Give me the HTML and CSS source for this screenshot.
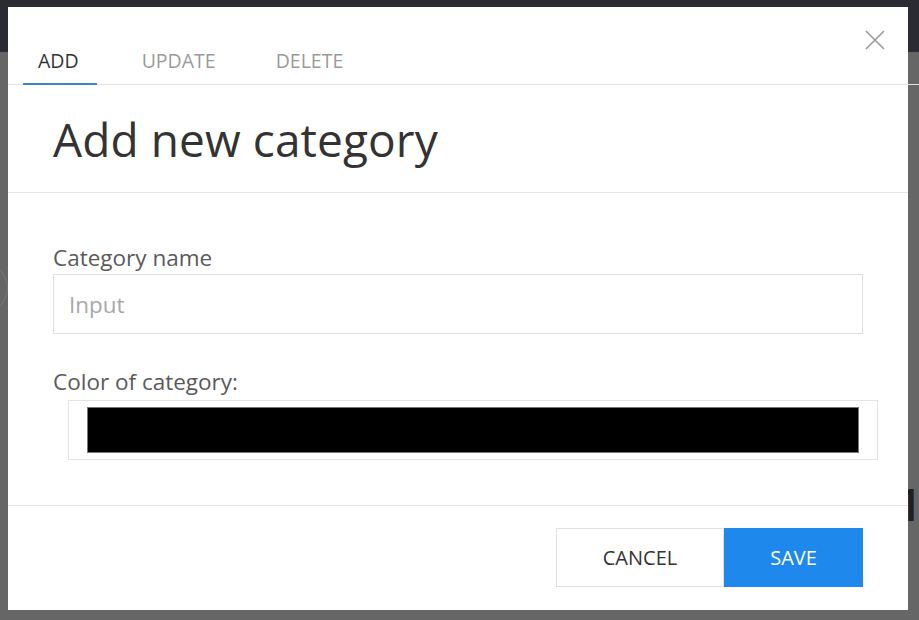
FILE: index.html
```html
<!DOCTYPE html>
<html>
<head>
<meta charset="utf-8">
<link rel="stylesheet" href="styles.css">
</head>
<body>
<div class="page">
  <div class="topbar"></div>
  <div class="backdrop">
    <div class="bg-arc"></div>
    <div class="bg-digit">1</div>
  </div>
</div>
<div class="modal">
  <button class="close" aria-label="Close">
    <svg width="20" height="20" viewBox="0 0 20 20"><path d="M1 1 L19 19 M19 1 L1 19" stroke="#9a9a9a" stroke-width="1.6" fill="none"/></svg>
  </button>
  <nav class="tabs">
    <div class="tab active">ADD</div>
    <div class="tab">UPDATE</div>
    <div class="tab">DELETE</div>
  </nav>
  <header class="head">
    <h1 class="title">Add new category</h1>
  </header>
  <section class="body">
    <label class="label">Category name</label>
    <div class="input"><span class="placeholder">Input</span></div>
    <label class="label label-color">Color of category:</label>
    <div class="color-box"><div class="swatch"></div></div>
  </section>
  <footer class="foot">
    <button class="btn btn-cancel">CANCEL</button>
    <button class="btn btn-save">SAVE</button>
  </footer>
</div>
</body>
</html>
```
FILE: styles.css
```css
* { box-sizing: border-box; }
html, body { margin: 0; padding: 0; }
body {
  width: 919px;
  height: 620px;
  overflow: hidden;
  background: #666666;
  font-family: "Open Sans", "Noto Sans", sans-serif;
}
.page { display: flex; flex-direction: column; height: 620px; }
.topbar { height: 52px; background: #2b2b33; }
.backdrop { flex: 1; position: relative; background: #666666; }
.bg-arc {
  position: absolute; left: -40px; top: 212px;
  width: 48px; height: 48px; border-radius: 50%;
  border: 1px solid #777;
}
.bg-digit {
  position: absolute; left: 896px; top: 428px;
  font-size: 46px; font-weight: 600; color: #1f1f24; line-height: 1;
}
.modal {
  position: fixed;
  left: 8px; top: 7px;
  width: 900px; height: 603px;
  background: #fff;
  display: flex; flex-direction: column;
}
.close {
  position: absolute; right: 23px; top: 23px;
  width: 20px; height: 20px; padding: 0; border: 0; background: none;
  display: flex;
}
.tabs {
  display: flex; gap: 30px;
  height: 78px;
  padding: 0 15px;
  align-items: flex-end;
  border-bottom: 1px solid #e2e2e2;
  margin-right: -11px;
}
.tab {
  padding: 0 15px 9px;
  font-size: 19.5px;
  line-height: 26px;
  color: #9a9a9a;
  margin-bottom: -1px;
  border-bottom: 2px solid transparent;
}
.tab.active { color: #333; border-bottom-color: #3b86cf; padding-right: 18px; }
.head {
  height: 108px;
  padding: 0 45px;
  display: flex; align-items: center;
  border-bottom: 1px solid #e4e4e4;
}
.title {
  margin: 0; font-weight: 400;
  font-size: 46px; color: #333; line-height: 60px;
  letter-spacing: 0.1px;
}
.body {
  padding: 50px 45px 0;
  height: 313px;
  border-bottom: 1px solid #e4e4e4;
  display: flex; flex-direction: column; align-items: flex-start;
}
.label {
  font-size: 22.5px; line-height: 30px; color: #5a5a5a;
}
.input {
  margin-top: 1px;
  width: 810px; height: 60px;
  border: 1px solid #e0e0e0;
  display: flex; align-items: center;
  padding: 0 15px;
}
.placeholder { font-size: 22.4px; color: #a8a8a8; }
.label-color { margin-top: 33px; }
.color-box {
  margin-top: 3px;
  margin-left: 15px;
  width: 810px; height: 60px;
  border: 1px solid #e3e3e3;
  padding: 6px 18px;
}
.swatch { width: 100%; height: 100%; background: #000; border: 1px solid #777; }
.foot {
  flex: 1;
  display: flex; justify-content: flex-end; align-items: flex-start;
  padding: 22px 45px 0;
}
.btn {
  height: 59px;
  font-family: inherit;
  font-size: 20px;
  border: 0; margin: 0;
  cursor: pointer;
}
.btn-cancel {
  width: 168px; background: #fff; color: #333;
  border: 1px solid #e0e0e0;
}
.btn-save { width: 139px; background: #1e88ec; color: #fff; }
```
